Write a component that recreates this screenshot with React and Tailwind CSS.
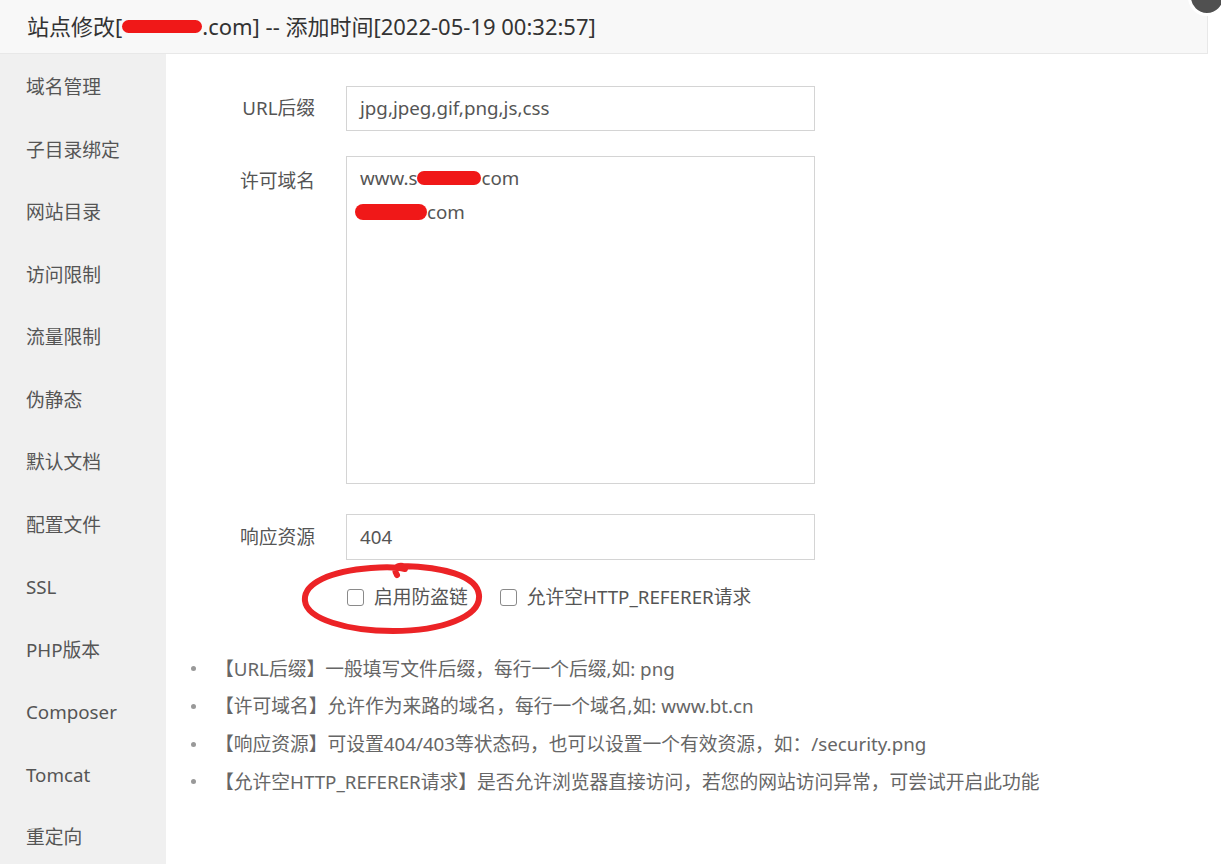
import React from 'react';

const FONT = { fontFamily: '"Noto Sans", "Noto Sans CJK SC", sans-serif' };

const MENU = [
    '域名管理', '子目录绑定', '网站目录', '访问限制', '流量限制', '伪静态', '默认文档',
    '配置文件', 'SSL', 'PHP版本', 'Composer', 'Tomcat', '重定向',
];

const TIPS = [
    '【URL后缀】一般填写文件后缀，每行一个后缀,如: png',
    '【许可域名】允许作为来路的域名，每行一个域名,如: www.bt.cn',
    '【响应资源】可设置404/403等状态码，也可以设置一个有效资源，如：/security.png',
    '【允许空HTTP_REFERER请求】是否允许浏览器直接访问，若您的网站访问异常，可尝试开启此功能',
];

// red marker used to hide the domain
const Blot = ({ w, h = 14 }) => (
    <span className="inline-block align-middle rounded-full bg-[#f01818]" style={{ width: w, height: h }} />
);

const Checkbox = ({ label }) => (
    <label className="flex items-center gap-[10px] text-[18.75px] text-[#555]">
        <span className="w-[17px] h-[17px] rounded-[3px] border-[1.5px] border-[#8a8a8a] bg-white" />
        {label}
    </label>
);

export default function App() {
    return (
        <div className="w-[1221px] h-[864px] bg-white overflow-hidden relative" style={FONT}>
            {/* close button, cut off at the corner */}
            <div className="absolute left-[1188px] top-[-22px] w-[38px] h-[38px] rounded-full bg-[#505050] border-[3px] border-white z-10" />

            <div className="w-[1208px] h-full flex flex-col">
                {/* Header */}
                <div className="h-[54px] shrink-0 bg-[#f8f8f8] border-b border-r border-[#e8e8e8] flex items-center pl-[27px] text-[22px] text-[#333]">
                    站点修改[<Blot w={80} h={13} />.com] -- 添加时间[2022-05-19 00:32:57]
                </div>

                <div className="flex flex-1 min-h-0">
                    {/* Sidebar */}
                    <div className="w-[166px] shrink-0 bg-[#f0f0f0] pt-[2px]">
                        {MENU.map((m) => (
                            <div key={m} className="h-[62.5px] flex items-center pl-[26px] text-[18.75px] text-[#555]">
                                {m}
                            </div>
                        ))}
                    </div>

                    {/* Content */}
                    <div className="flex-1 pt-[32px]">
                        <div className="flex items-center">
                            <div className="w-[149px] text-right text-[18.75px] text-[#555]">URL后缀</div>
                            <div className="ml-[31px] w-[469px] h-[45px] border border-[#d4d4d4] flex items-center pl-[13px] text-[18.75px] text-[#555]">
                                jpg,jpeg,gif,png,js,css
                            </div>
                        </div>

                        <div className="flex mt-[25px]">
                            <div className="w-[149px] text-right text-[18.75px] text-[#555] pt-[11px]">许可域名</div>
                            <div className="ml-[31px] w-[469px] h-[328px] border border-[#d4d4d4] pl-[13px] pt-[4px] text-[18.75px] text-[#555] leading-[34px]">
                                <div className="flex items-center">www.s<Blot w={64} h={14} />com</div>
                                <div className="flex items-center -ml-[5px]"><Blot w={72} h={16} />com</div>
                            </div>
                        </div>

                        <div className="flex items-center mt-[30px]">
                            <div className="w-[149px] text-right text-[18.75px] text-[#555]">响应资源</div>
                            <div className="ml-[31px] w-[469px] h-[46px] border border-[#d4d4d4] flex items-center pl-[13px] text-[18.75px] text-[#555]">
                                404
                            </div>
                        </div>

                        <div className="relative flex items-center gap-[32px] ml-[181px] mt-[25px] h-[24px]">
                            <Checkbox label="启用防盗链" />
                            <Checkbox label="允许空HTTP_REFERER请求" />
                            {/* hand-drawn red circle annotation */}
                            <svg className="absolute left-[-46px] top-[-24px] pointer-events-none" width="190" height="76" viewBox="0 0 190 76" fill="none">
                                <path
                                    d="M96 14 C92 8 96 4 102 5 C140 6 176 14 178 34 C180 56 140 70 92 70 C46 70 6 58 4 40 C2 22 30 10 70 7 C84 6 96 6 104 8"
                                    stroke="#ec2326" strokeWidth="6" strokeLinecap="round" strokeLinejoin="round"
                                />
                            </svg>
                        </div>

                        <ul className="mt-[41px] pl-[25px]">
                            {TIPS.map((t) => (
                                <li key={t} className="flex items-center h-[37.7px] text-[18.75px] text-[#666]">
                                    <span className="w-[5px] h-[5px] rounded-full bg-[#999] mr-[19px] shrink-0" />
                                    {t}
                                </li>
                            ))}
                        </ul>
                    </div>
                </div>
            </div>
        </div>
    );
}
